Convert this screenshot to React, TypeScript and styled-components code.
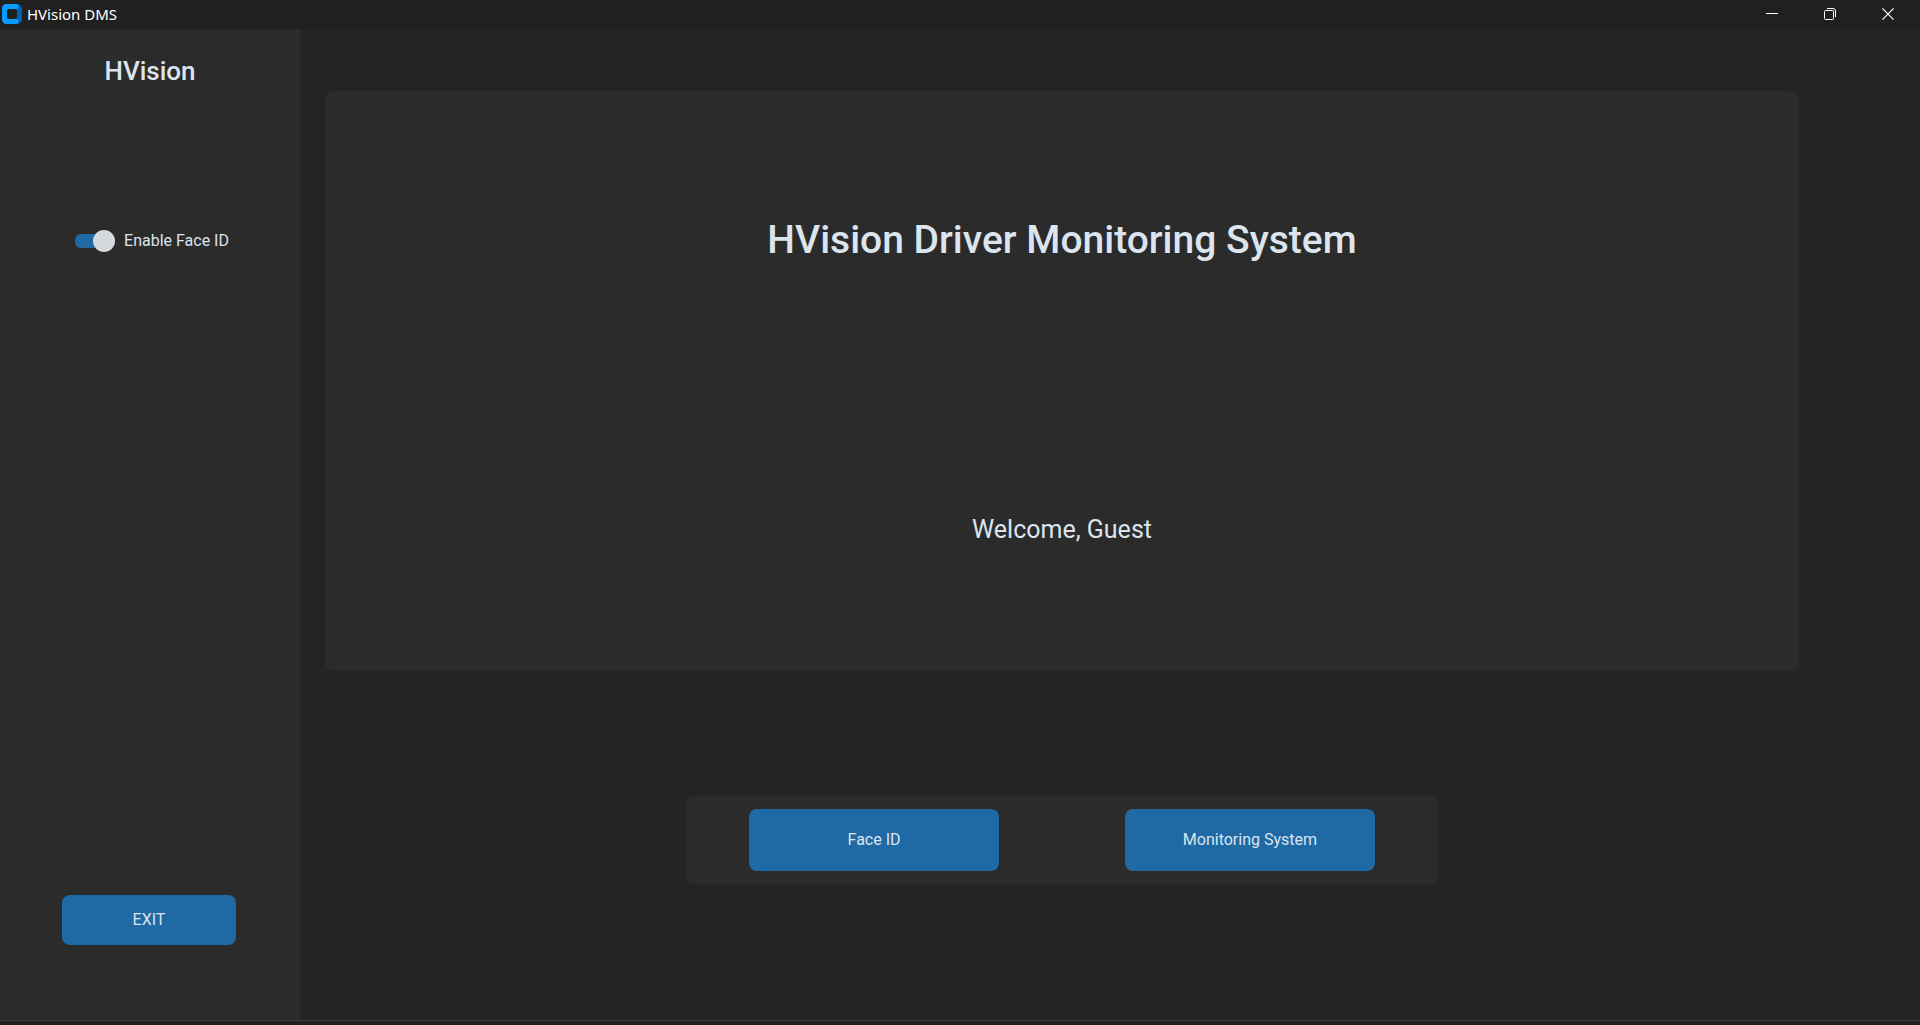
import { useState } from "react";
import styled, { createGlobalStyle } from "styled-components";

const GlobalStyle = createGlobalStyle`
  *, *::before, *::after { box-sizing: border-box; }
  body {
    margin: 0;
    background: #242424;
    color: #dce4ee;
    font-family: Roboto, "Liberation Sans", sans-serif;
  }
  button { font: inherit; color: inherit; border: 0; cursor: pointer; }
`;

const Window = styled.div`
  display: flex;
  flex-direction: column;
  height: 100vh;
  overflow: hidden;
`;

const TitleBar = styled.header`
  display: flex;
  align-items: center;
  flex: none;
  height: 29px;
  padding: 0 3px 1px 2px;
  background: #202020;
  color: #ffffff;
`;

const WindowTitle = styled.span`
  flex: 1;
  padding-left: 5px;
  font-family: "Noto Sans", "Open Sans", sans-serif;
  font-size: 15px;
  line-height: 20px;
`;

const WindowButton = styled.button`
  display: grid;
  place-items: center;
  width: 58px;
  height: 28px;
  padding: 0;
  background: transparent;
  &:hover { background: #333333; }
`;

const Body = styled.div`
  display: flex;
  flex: 1;
  min-height: 0;
`;

const Sidebar = styled.aside`
  display: flex;
  flex-direction: column;
  align-items: center;
  flex: none;
  width: 300px;
  padding: 26px 0 75px;
  background: #2b2b2b;
`;

const Brand = styled.h2`
  margin: 0;
  font-size: 26px;
  line-height: 32px;
  font-weight: 500;
`;

const SwitchLabel = styled.label`
  display: flex;
  align-items: center;
  gap: 9px;
  margin-top: 142px;
  padding-left: 4px;
  font-size: 16px;
  line-height: 24px;
  cursor: pointer;
`;

const Switch = styled.input`
  appearance: none;
  display: grid;
  align-items: center;
  width: 40px;
  height: 22px;
  margin: 0;
  cursor: pointer;

  &::before,
  &::after {
    content: "";
    grid-area: 1 / 1;
  }
  &::before {
    height: 14px;
    border-radius: 6px;
    background: #4a4d50;
  }
  &::after {
    width: 22px;
    height: 22px;
    border-radius: 50%;
    background: #d5d9de;
  }
  &:checked::before { background: #1f6aa5; }
  &:checked::after { justify-self: end; }
`;

const Action = styled.button<{ $width: number; $height: number }>`
  width: ${(p) => p.$width}px;
  height: ${(p) => p.$height}px;
  padding: 0;
  border-radius: 8px;
  background: #1f6aa5;
  font-size: 16px;
  line-height: 24px;
  &:hover { background: #144870; }
`;

const SidebarFooter = styled.div`
  margin-top: auto;
  padding-right: 2px;
`;

const Main = styled.main`
  display: flex;
  flex-direction: column;
  flex: 1;
  min-width: 0;
  padding: 62px 121px 136px 25px;
`;

const Hero = styled.section`
  display: grid;
  grid-template-rows: 1fr 1fr;
  place-items: center;
  flex: 1;
  min-height: 0;
  border-radius: 8px;
  background: #2b2b2b;
`;

const Heading = styled.h1`
  margin: 8px 0 0;
  font-size: 39px;
  line-height: 48px;
  font-weight: 500;
`;

const Welcome = styled.p`
  margin: 8px 0 0;
  font-size: 25px;
  line-height: 32px;
`;

const ActionPanel = styled.nav`
  display: grid;
  grid-template-columns: 1fr 1fr;
  justify-items: center;
  align-self: center;
  width: 51%;
  min-width: 560px;
  margin-top: 125px;
  padding: 13px 0;
  border-radius: 8px;
  background: #2b2b2b;
`;

const BottomEdge = styled.footer`
  flex: none;
  height: 5px;
  border-top: 1px solid #3f3f3f;
  background: #202020;
`;

const AppLogo = () => (
  <svg width="20" height="20" viewBox="0 0 20 20" aria-hidden="true">
    <rect width="20" height="20" rx="5" fill="#0063b1" />
    <path
      d="M5 0H14A2.5 2.5 0 0 1 14 5H7Q5 5 5 7V13Q5 15 7 15H14A2.5 2.5 0 0 1 14 20H5Q0 20 0 15V5Q0 0 5 0Z"
      fill="#0a9bff"
    />
    <rect x="5" y="5" width="10" height="10" rx="2" fill="#202020" />
  </svg>
);

const MinimizeIcon = () => (
  <svg width="12" height="12" viewBox="0 0 12 12" aria-hidden="true">
    <path d="M0 5.5H12" stroke="#fff" />
  </svg>
);

const RestoreIcon = () => (
  <svg width="12" height="12" viewBox="0 0 12 12" fill="none" stroke="#fff" aria-hidden="true">
    <rect x="0.5" y="2.5" width="9" height="9" rx="1" />
    <path d="M3 0.5H9A2.5 2.5 0 0 1 11.5 3V9" />
  </svg>
);

const CloseIcon = () => (
  <svg width="12" height="12" viewBox="0 0 12 12" aria-hidden="true">
    <path d="M0.4 0.4L11.6 11.6M11.6 0.4L0.4 11.6" stroke="#fff" strokeWidth="1.2" />
  </svg>
);

export default function App() {
  const [faceId, setFaceId] = useState(true);

  return (
    <Window>
      <GlobalStyle />
      <TitleBar>
        <AppLogo />
        <WindowTitle>HVision DMS</WindowTitle>
        <WindowButton aria-label="Minimize"><MinimizeIcon /></WindowButton>
        <WindowButton aria-label="Restore"><RestoreIcon /></WindowButton>
        <WindowButton aria-label="Close"><CloseIcon /></WindowButton>
      </TitleBar>
      <Body>
        <Sidebar>
          <Brand>HVision</Brand>
          <SwitchLabel htmlFor="face-id">
            <Switch
              id="face-id"
              type="checkbox"
              role="switch"
              checked={faceId}
              onChange={(e) => setFaceId(e.target.checked)}
            />
            Enable Face ID
          </SwitchLabel>
          <SidebarFooter>
            <Action $width={174} $height={50}>EXIT</Action>
          </SidebarFooter>
        </Sidebar>
        <Main>
          <Hero>
            <Heading>HVision Driver Monitoring System</Heading>
            <Welcome>Welcome, Guest</Welcome>
          </Hero>
          <ActionPanel>
            <Action $width={250} $height={62}>Face ID</Action>
            <Action $width={250} $height={62}>Monitoring System</Action>
          </ActionPanel>
        </Main>
      </Body>
      <BottomEdge />
    </Window>
  );
}
